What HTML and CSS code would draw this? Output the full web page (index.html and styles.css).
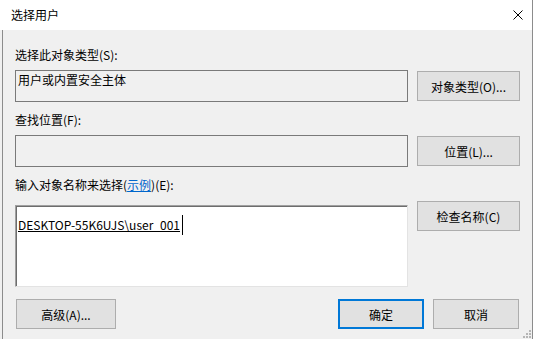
FILE: index.html
```html
<!DOCTYPE html>
<html lang="zh-CN">
<head>
    <meta charset="UTF-8">
    <title>选择用户</title>
    <link rel="stylesheet" href="styles.css">
</head>
<body>
    <div class="window">
        <div class="titlebar">
            <span class="title">选择用户</span>
            <svg class="close" width="10" height="10" viewBox="0 0 10 10">
                <path d="M0.5 0.5 L9.5 9.5 M9.5 0.5 L0.5 9.5" stroke="#000" stroke-width="1" fill="none"/>
            </svg>
        </div>
        <div class="content">
            <div class="label">选择此对象类型(S):</div>
            <div class="row">
                <div class="field">用户或内置安全主体</div>
                <button class="btn side">对象类型(O)...</button>
            </div>

            <div class="label">查找位置(F):</div>
            <div class="row">
                <div class="field"></div>
                <button class="btn side">位置(L)...</button>
            </div>

            <div class="label">输入对象名称来选择(<a class="link" href="#">示例</a>)(E):</div>
            <div class="row">
                <div class="names"><span class="resolved">DESKTOP-55K6UJS\user_001</span><span class="caret"></span></div>
                <button class="btn side">检查名称(C)</button>
            </div>

            <div class="footer">
                <button class="btn advanced">高级(A)...</button>
                <div class="actions">
                    <button class="btn default">确定</button>
                    <button class="btn">取消</button>
                </div>
            </div>
        </div>
        <!-- resize grip -->
        <svg class="grip" width="9" height="9" viewBox="0 0 9 9">
            <rect x="7" y="1" width="2" height="2" fill="#b5b5b5"/>
            <rect x="4" y="4" width="2" height="2" fill="#b5b5b5"/>
            <rect x="7" y="4" width="2" height="2" fill="#b5b5b5"/>
            <rect x="1" y="7" width="2" height="2" fill="#b5b5b5"/>
            <rect x="4" y="7" width="2" height="2" fill="#b5b5b5"/>
            <rect x="7" y="7" width="2" height="2" fill="#b5b5b5"/>
        </svg>
    </div>
</body>
</html>
```

FILE: styles.css
```css
/* Page */
body {
    margin: 0;
    background-color: #ffffff;
    font-family: "Noto Sans CJK SC", "Noto Sans", sans-serif;
    font-size: 12px;
    line-height: 16px;
    color: #000000;
    overflow: hidden;
}
/* Dialog window */
.window {
    position: relative;
    width: 532px;
    height: 339px;
    border-right: 1px solid #8c8c8c;
    background-color: #ffffff;
}
/* Title bar */
.titlebar {
    display: flex;
    align-items: center;
    height: 30px;
    padding: 0 9px 0 11px;
    background-color: #ffffff;
}
.title {
    margin-top: -1px;
}
.close {
    margin-left: auto;
    margin-top: -1px;
}
/* Main area */
.content {
    height: 309px;
    box-sizing: border-box;
    padding: 17px 0 0 15px;
    background: linear-gradient(to right, #f0f0f0 2px, #8c8c8c 2px, #8c8c8c 3px, #f0f0f0 3px);
}
.label {
    height: 16px;
}
.label + .row {
    margin-top: 7px;
}
.row + .label {
    margin-top: 10px;
}
.row {
    display: flex;
    align-items: flex-start;
    gap: 9px;
}
/* Read-only text boxes */
.field {
    width: 393px;
    height: 32px;
    box-sizing: border-box;
    padding: 1px 2px;
    border: 1px solid #7a7a7a;
    background-color: #f0f0f0;
}
/* Name entry box */
.names {
    width: 393px;
    height: 82px;
    box-sizing: border-box;
    margin-top: 5px;
    padding: 9px 2px 0 2px;
    border: 1px solid;
    border-color: #a0a0a0 #e3e3e3 #e3e3e3 #a0a0a0;
    box-shadow: inset 1px 1px 0 #6d6d6d;
    background-color: #ffffff;
}
.resolved {
    text-decoration: underline;
}
.caret {
    display: inline-block;
    width: 1px;
    height: 20px;
    margin-left: 2px;
    vertical-align: -5px;
    background-color: #000000;
}
.link {
    color: #0066cc;
    text-decoration: underline;
}
/* Buttons */
.btn {
    height: 30px;
    box-sizing: border-box;
    padding: 0;
    border: 1px solid #adadad;
    background-color: #e1e1e1;
    font-family: inherit;
    font-size: 12px;
    color: #000000;
}
.side {
    width: 103px;
    margin-top: 1px;
}
.default {
    border: 2px solid #0078d7;
}
/* Bottom buttons */
.footer {
    display: flex;
    margin-top: 12px;
    padding-left: 1px;
}
.advanced {
    width: 100px;
}
.actions {
    display: flex;
    gap: 9px;
    margin-left: 222px;
}
.actions .btn {
    width: 86px;
}
/* Resize grip in the corner */
.grip {
    position: absolute;
    right: 1px;
    bottom: 1px;
}
```
